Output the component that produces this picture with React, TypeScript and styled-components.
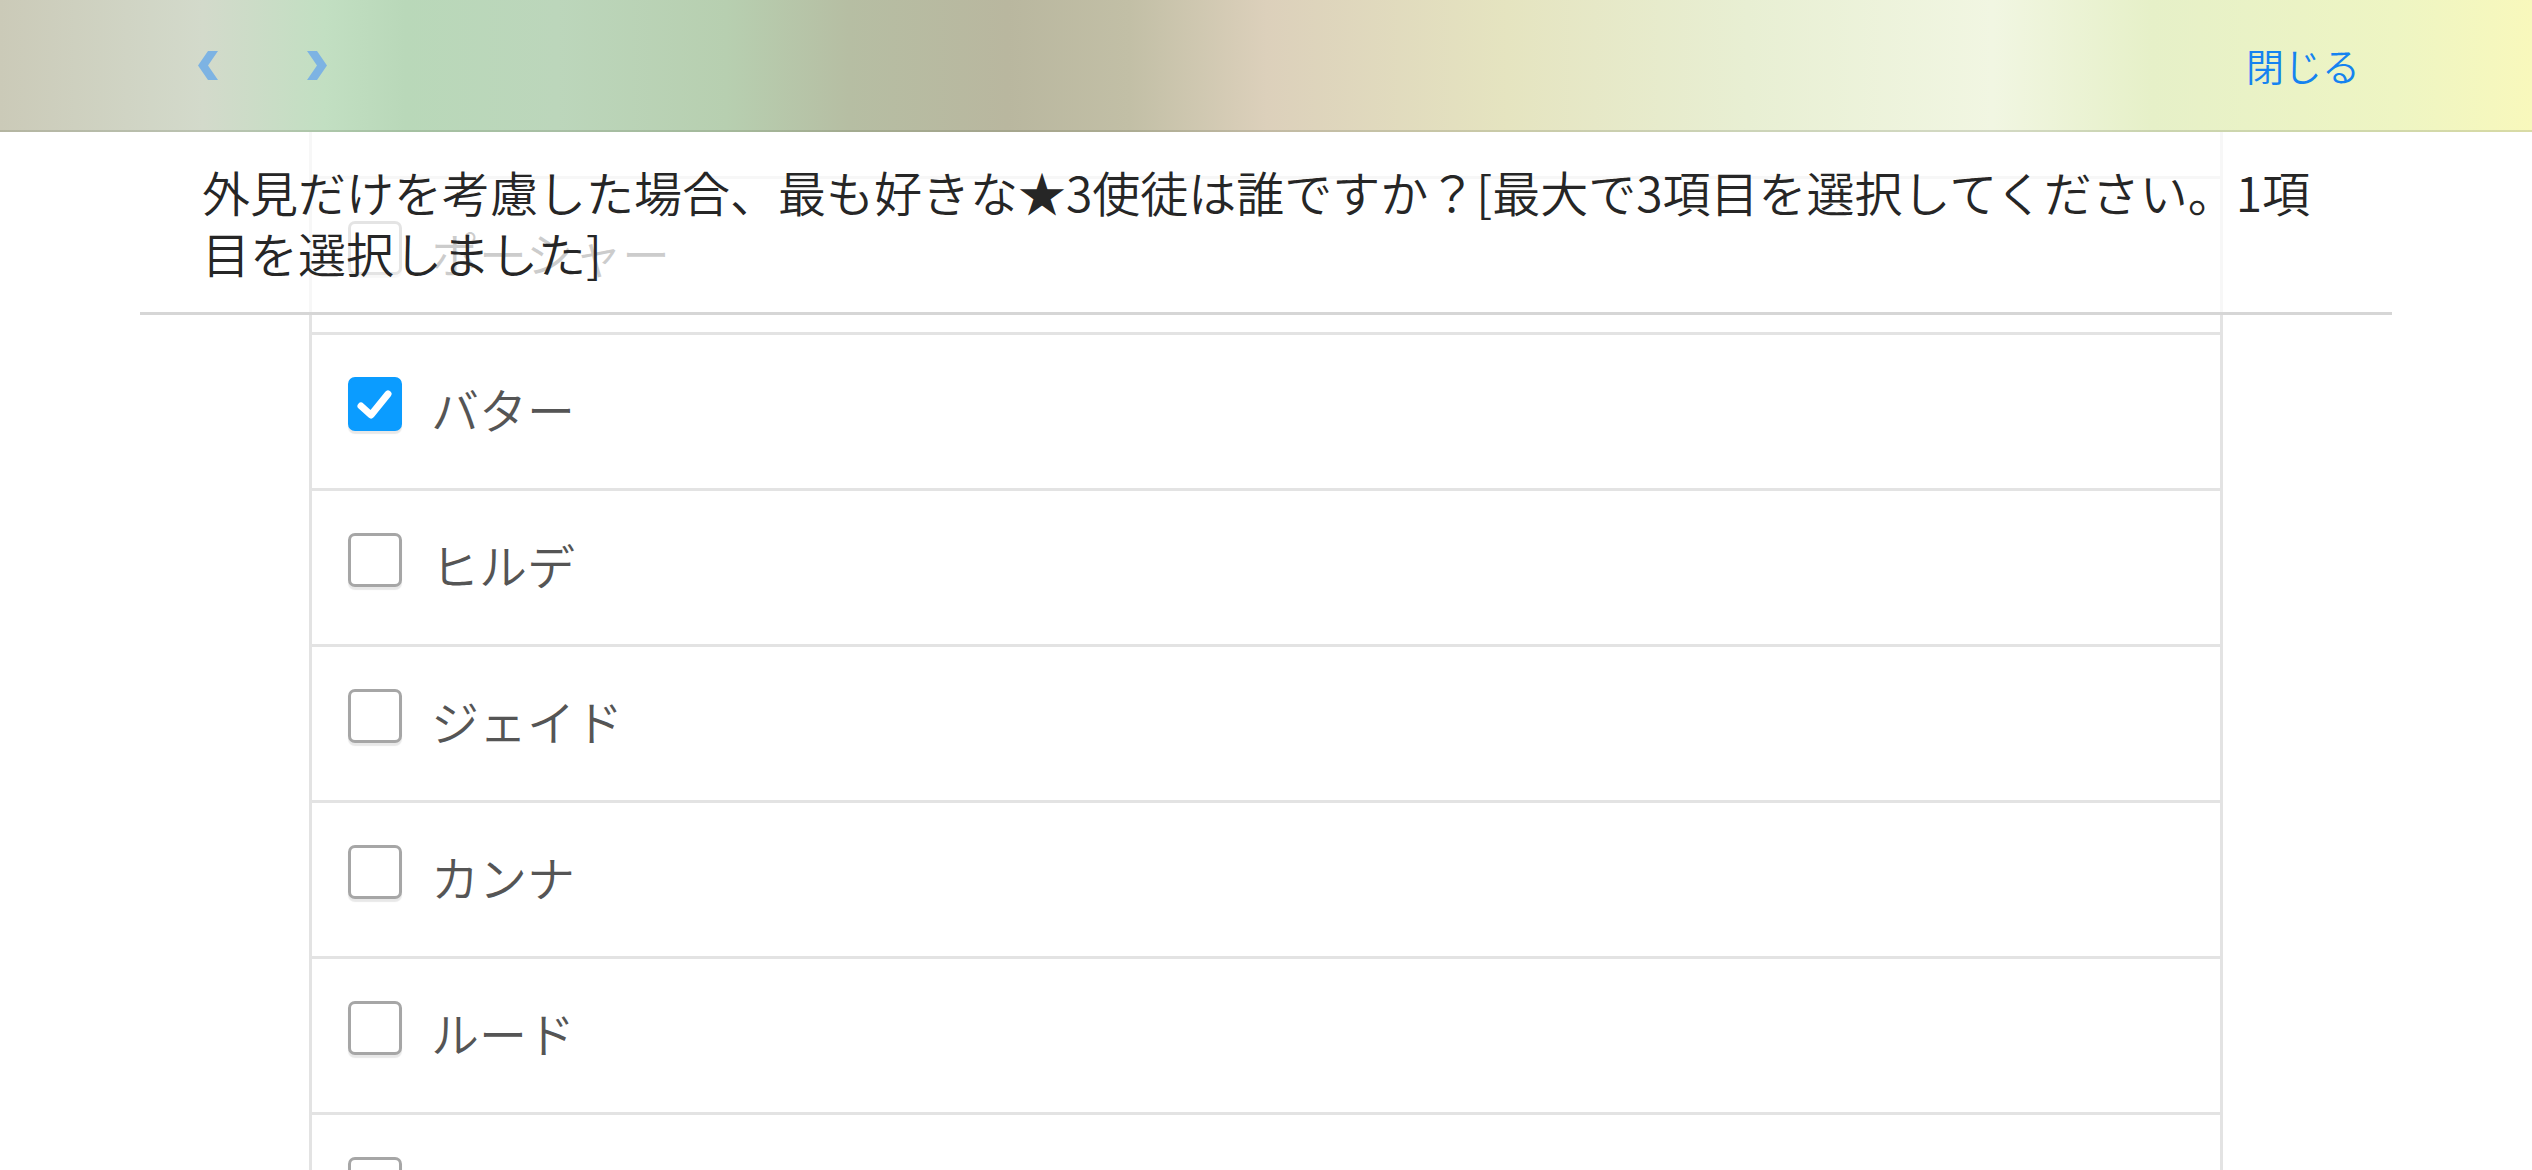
import React from "react";
import styled, { createGlobalStyle } from "styled-components";

const GlobalStyle = createGlobalStyle`
  html, body {
    margin: 0;
    padding: 0;
    background: #ffffff;
    overflow: hidden;
  }
  body {
    font-family: "Noto Sans CJK JP", "Noto Sans", sans-serif;
  }
`;

const Page = styled.div`
  width: 2532px;
  height: 1170px;
  display: flex;
  flex-direction: column;
  overflow: hidden;
`;

const Header = styled.header`
  flex: none;
  height: 130px;
  border-bottom: 2px solid rgba(80, 90, 60, 0.18);
  background: linear-gradient(
    90deg,
    #cbcab8 0%,
    #d3dacb 8%,
    #c2dfc2 12.8%,
    #b9d8b9 16%,
    #bcd6bb 22%,
    #b7cfb0 28.7%,
    #b6bea3 33.5%,
    #b9b79f 39.8%,
    #c2bfa6 44.6%,
    #dcd0bb 50%,
    #e5e4c0 59.5%,
    #e8efd3 69%,
    #f1f6e2 78.7%,
    #e6f0c8 85%,
    #eef5c3 94.6%,
    #f8f8bc 100%
  );
  display: flex;
  align-items: center;
  justify-content: space-between;
  padding: 0 172px 0 198px;
`;

const NavGroup = styled.div`
  display: flex;
  align-items: center;
  gap: 89px;
`;

const NavButton = styled.button`
  border: 0;
  background: none;
  padding: 0;
  width: 20px;
  height: 29px;
  cursor: pointer;
  svg {
    display: block;
  }
`;

const CloseButton = styled.button`
  border: 0;
  background: none;
  padding: 0;
  font-family: inherit;
  font-size: 38px;
  font-weight: 350;
  line-height: 1;
  color: #1583f0;
  cursor: pointer;
`;

const Main = styled.main`
  position: relative;
  flex: 1;
  overflow: hidden;
`;

const List = styled.ul`
  list-style: none;
  margin: 0 auto;
  padding: 44px 0 0;
  width: 1914px;
  min-height: 100%;
  box-sizing: border-box;
  border-left: 3px solid #e3e3e3;
  border-right: 3px solid #e3e3e3;
`;

const Row = styled.li`
  height: 156px;
  box-sizing: border-box;
  border-top: 3px solid #e3e3e3;
  display: flex;
  align-items: center;
  gap: 29px;
  padding-left: 36px;
`;

const CheckBox = styled.span<{ $checked: boolean }>`
  flex: none;
  width: 54px;
  height: 54px;
  box-sizing: border-box;
  border-radius: 7px;
  margin-bottom: 16px;
  border: 3px solid ${(p) => (p.$checked ? "#0b9cff" : "#a6a6a6")};
  background: ${(p) => (p.$checked ? "#0b9cff" : "#ffffff")};
  box-shadow: 0 3px 1px rgba(0, 0, 0, 0.09);
  display: flex;
  align-items: center;
  justify-content: center;
  svg {
    display: block;
  }
`;

const Label = styled.span`
  font-size: 48px;
  font-weight: 350;
  line-height: 1;
  margin-bottom: 8px;
  color: #555555;
`;

const QuestionOverlay = styled.div`
  position: absolute;
  top: 0;
  left: 140px;
  right: 140px;
  padding: 29px 62px;
  background: rgba(255, 255, 255, 0.7);
  border-bottom: 3px solid #d6d6d6;
`;

const QuestionText = styled.p`
  margin: 0;
  font-size: 48px;
  font-weight: 350;
  line-height: 61px;
  color: #262626;
`;

const Chevron = ({ dir }: { dir: "left" | "right" }) => (
  <svg width="20" height="29" viewBox="0 0 20 29">
    <polygon
      fill="#7db3e3"
      points={
        dir === "left"
          ? "10,0 20,0 10,14.5 20,29 10,29 0,14.5"
          : "0,0 10,0 20,14.5 10,29 0,29 10,14.5"
      }
    />
  </svg>
);

const Check = () => (
  <svg width="48" height="48" viewBox="0 0 48 48">
    <polyline
      points="10,26 20,35 37,14"
      fill="none"
      stroke="#ffffff"
      strokeWidth="7"
      strokeLinecap="round"
      strokeLinejoin="round"
    />
  </svg>
);

const options = [
  { name: "ポーシャー", checked: false },
  { name: "バター", checked: true },
  { name: "ヒルデ", checked: false },
  { name: "ジェイド", checked: false },
  { name: "カンナ", checked: false },
  { name: "ルード", checked: false },
  { name: "ミハエル", checked: false },
];

export default function App() {
  return (
    <>
      <GlobalStyle />
      <Page>
        <Header>
          <NavGroup>
            <NavButton aria-label="前へ">
              <Chevron dir="left" />
            </NavButton>
            <NavButton aria-label="次へ">
              <Chevron dir="right" />
            </NavButton>
          </NavGroup>
          <CloseButton>閉じる</CloseButton>
        </Header>
        <Main>
          <List>
            {options.map((o) => (
              <Row key={o.name}>
                <CheckBox $checked={o.checked}>{o.checked && <Check />}</CheckBox>
                <Label>{o.name}</Label>
              </Row>
            ))}
          </List>
          <QuestionOverlay>
            <QuestionText>
              外見だけを考慮した場合、最も好きな★3使徒は誰ですか？[最大で3項目を選択してください。1項目を選択しました]
            </QuestionText>
          </QuestionOverlay>
        </Main>
      </Page>
    </>
  );
}
